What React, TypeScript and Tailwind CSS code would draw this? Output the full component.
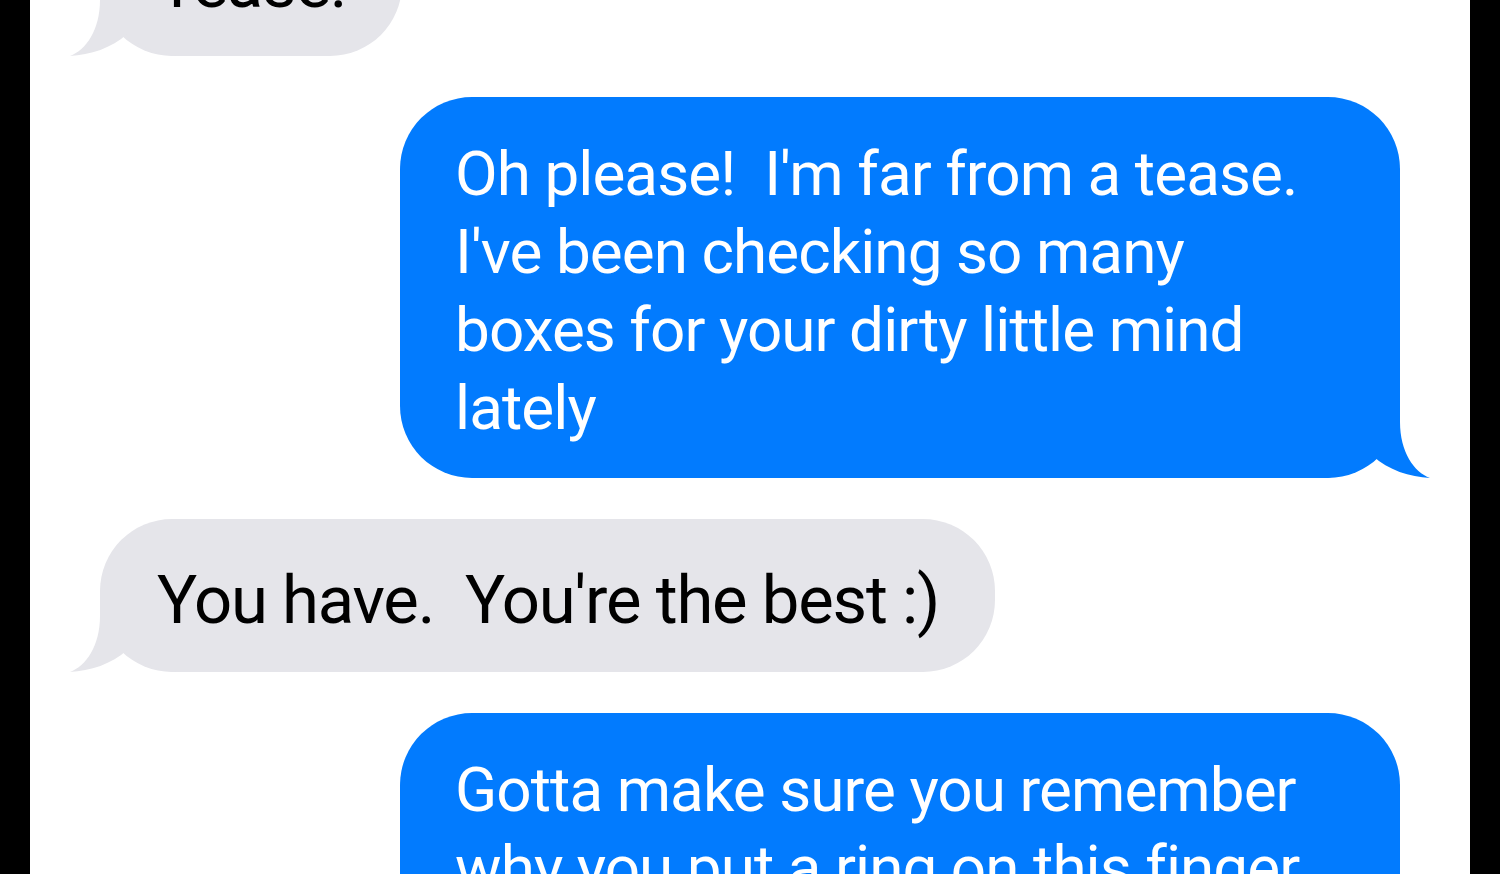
const font = { fontFamily: 'Roboto, "Noto Sans", sans-serif' }

function Tail({ color, side }: { color: string; side: "left" | "right" }) {
    return (
        <svg
            width="112"
            height="80"
            viewBox="0 0 112 80"
            className={side === "right" ? "absolute -right-[32px] bottom-0" : "absolute -left-[32px] bottom-0 -scale-x-100"}
        >
            <path
                d="M80 0 L80 24 C80 54 94 74 110 80 C90 79 68 72 53 58 C38 72 20 80 0 80 L0 0 Z"
                fill={color}
            />
        </svg>
    )
}

function Received({ lines }: { lines: string[] }) {
    return (
        <div className="relative w-fit rounded-[72px] bg-[#e5e5ea] pl-[57px] pr-[56px] pt-[42px] pb-[33px]">
            <Tail color="#e5e5ea" side="left" />
            <div className="relative text-[67px] leading-[78px] tracking-[-0.018em] text-black whitespace-pre" style={font}>
                {lines.map((l, i) => <div key={i}>{l}</div>)}
            </div>
        </div>
    )
}

function Sent({ lines }: { lines: string[] }) {
    return (
        <div className="relative ml-auto w-[1000px] rounded-[72px] bg-[#027bfe] pl-[55px] pr-[40px] pt-[38px] pb-[31px]">
            <Tail color="#027bfe" side="right" />
            <div className="relative text-[62px] leading-[78px] tracking-[-0.015em] text-white whitespace-pre" style={font}>
                {lines.map((l, i) => <div key={i}>{l}</div>)}
            </div>
        </div>
    )
}

export default function App() {
    return (
        <div className="w-[1500px] h-[874px] bg-black overflow-hidden">
            <div className="mx-[30px] h-full bg-white overflow-hidden px-[70px]">
                <div className="flex flex-col gap-[41px] -mt-[97px]">
                    <Received lines={["Tease."]} />
                    <Sent lines={["Oh please!  I'm far from a tease.", "I've been checking so many", "boxes for your dirty little mind", "lately"]} />
                    <Received lines={["You have.  You're the best :)"]} />
                    <Sent lines={["Gotta make sure you remember", "why you put a ring on this finger", "and what you get in return"]} />
                </div>
            </div>
        </div>
    )
}
